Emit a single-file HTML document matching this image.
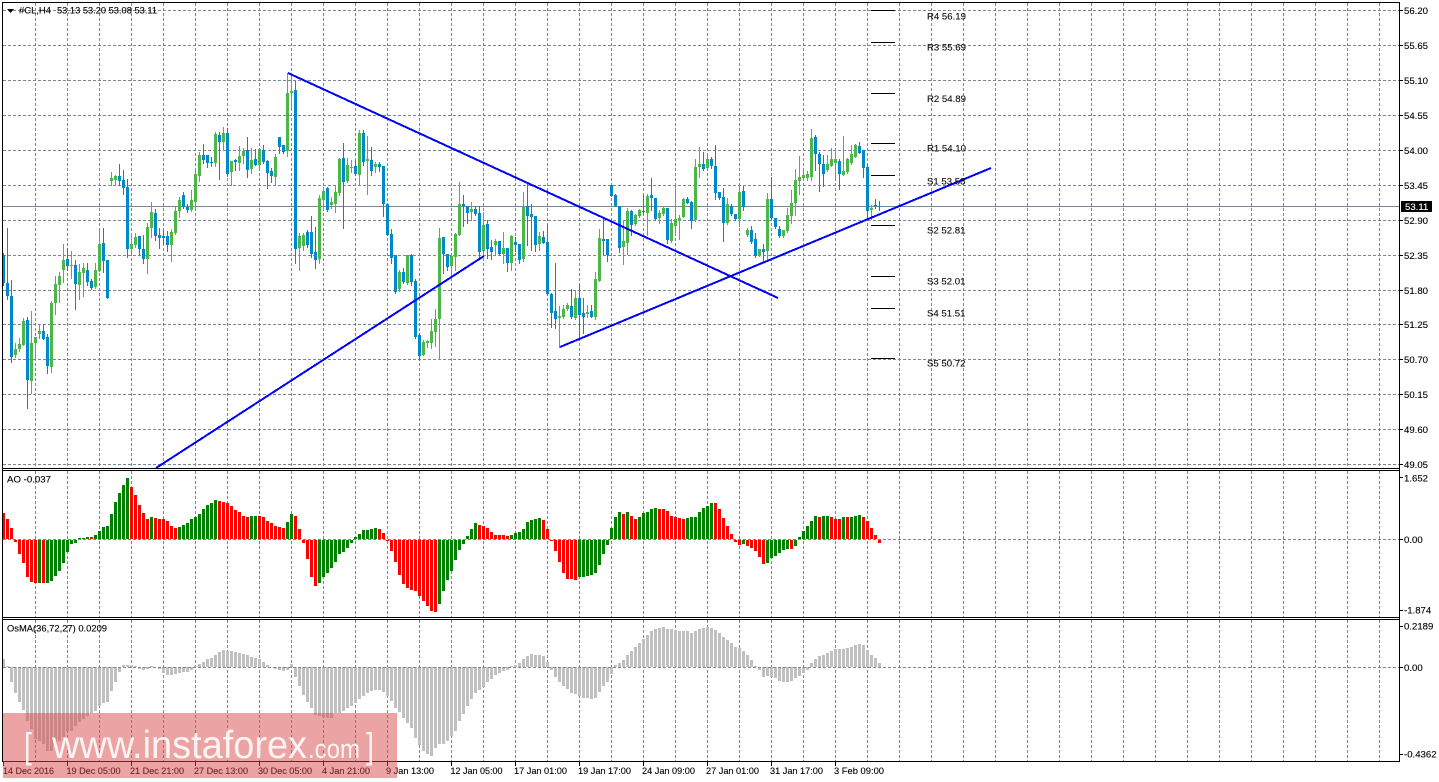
<!DOCTYPE html>
<html>
<head>
<meta charset="utf-8">
<title>#CL H4</title>
<style>
html,body{margin:0;padding:0;background:#fff;overflow:hidden}
svg{display:block}
text{font-family:"Liberation Sans",Arial,sans-serif;font-size:9.6px;fill:#000;stroke:#000;stroke-width:.12px}
.pv{font-size:9.6px;fill:#111}
.logo{fill:#fff;stroke:none;fill-opacity:.88}
</style>
</head>
<body>
<svg id="s" xmlns="http://www.w3.org/2000/svg" width="1439" height="782" viewBox="0 0 1439 782">
<rect width="1439" height="782" fill="#fff"/>
<g id="grid" shape-rendering="crispEdges"></g>
<g id="candles" shape-rendering="crispEdges"></g>
<g id="ao" shape-rendering="crispEdges"></g>
<g id="osma" shape-rendering="crispEdges"></g>
<g id="zero" shape-rendering="crispEdges"></g>

<g stroke="#000" stroke-width="1" shape-rendering="crispEdges">
<path d="M871 10.5H895M871 42.5H895M871 93.5H895M871 143.5H895M871 175.5H895M871 225.5H895M871 276.5H895M871 308.5H895M871 358.5H895"/>
</g>

<g stroke="#0000ff" stroke-width="2" fill="none" shape-rendering="crispEdges">
<path d="M288 73L778 298"/>
<path d="M156 468L484 256"/>
<path d="M560 347L991 168"/>
</g>

<g shape-rendering="crispEdges" fill="none" stroke="#000" stroke-width="1">
<path d="M2 2.5H1399.5M2.5 2V761M1399.5 2V762"/>
<path d="M2 468.5H1400M2 470.5H1400M2 617.5H1400M2 619.5H1400M2 761.5H1400"/>
</g>
<g id="ticks" shape-rendering="crispEdges" stroke="#000" stroke-width="1"></g>

<path d="M7 9H14L10.500 13Z" fill="#000"/>
<text x="19" y="13.500" textLength="32" lengthAdjust="spacingAndGlyphs">#CL,H4</text>
<text x="57" y="13.500" textLength="100" lengthAdjust="spacingAndGlyphs">53.13 53.20 53.08 53.11</text>
<text x="7" y="482.500" textLength="44" lengthAdjust="spacingAndGlyphs">AO -0.037</text>
<text x="7" y="631.500" textLength="100" lengthAdjust="spacingAndGlyphs">OsMA(36,72,27) 0.0209</text>

<g>
<text class="pv" x="927" y="19.500">R4 56.19</text>
<text class="pv" x="927" y="50.500">R3 55.69</text>
<text class="pv" x="927" y="102">R2 54.89</text>
<text class="pv" x="927" y="151.500">R1 54.10</text>
<text class="pv" x="927" y="184.500">S1 53.58</text>
<text class="pv" x="927" y="233.500">S2 52.81</text>
<text class="pv" x="927" y="284.500">S3 52.01</text>
<text class="pv" x="927" y="316.500">S4 51.51</text>
<text class="pv" x="927" y="366.500">S5 50.72</text>
</g>

<g>
<text x="1404" y="14">56.20</text>
<text x="1404" y="49">55.65</text>
<text x="1404" y="84">55.10</text>
<text x="1404" y="119">54.55</text>
<text x="1404" y="154">54.00</text>
<text x="1404" y="189">53.45</text>
<text x="1404" y="224">52.90</text>
<text x="1404" y="259">52.35</text>
<text x="1404" y="294">51.80</text>
<text x="1404" y="328">51.25</text>
<text x="1404" y="363">50.70</text>
<text x="1404" y="398">50.15</text>
<text x="1404" y="433">49.60</text>
<text x="1404" y="468">49.05</text>
<text x="1404" y="481.500">1.652</text>
<text x="1404" y="543">0.00</text>
<text x="1404" y="613.500">-1.874</text>
<text x="1404" y="629.500">0.2189</text>
<text x="1404" y="671">0.00</text>
<text x="1404" y="757.500">-0.4362</text>
</g>
<rect x="1401" y="201" width="31" height="11" fill="#000" shape-rendering="crispEdges"/>
<text x="1405" y="210" style="fill:#fff;stroke:#fff">53.11</text>

<g>
<text x="3" y="774" textLength="51" lengthAdjust="spacingAndGlyphs">14 Dec 2016</text>
<text x="66.500" y="774" textLength="54" lengthAdjust="spacingAndGlyphs">19 Dec 05:00</text>
<text x="130" y="774" textLength="54" lengthAdjust="spacingAndGlyphs">21 Dec 21:00</text>
<text x="194" y="774" textLength="54" lengthAdjust="spacingAndGlyphs">27 Dec 13:00</text>
<text x="258" y="774" textLength="54" lengthAdjust="spacingAndGlyphs">30 Dec 05:00</text>
<text x="322" y="774" textLength="48" lengthAdjust="spacingAndGlyphs">4 Jan 21:00</text>
<text x="386" y="774" textLength="48" lengthAdjust="spacingAndGlyphs">9 Jan 13:00</text>
<text x="450.500" y="774" textLength="52" lengthAdjust="spacingAndGlyphs">12 Jan 05:00</text>
<text x="514" y="774" textLength="53" lengthAdjust="spacingAndGlyphs">17 Jan 01:00</text>
<text x="578" y="774" textLength="53" lengthAdjust="spacingAndGlyphs">19 Jan 17:00</text>
<text x="642" y="774" textLength="53" lengthAdjust="spacingAndGlyphs">24 Jan 09:00</text>
<text x="706" y="774" textLength="53" lengthAdjust="spacingAndGlyphs">27 Jan 01:00</text>
<text x="770" y="774" textLength="53" lengthAdjust="spacingAndGlyphs">31 Jan 17:00</text>
<text x="834" y="774" textLength="50" lengthAdjust="spacingAndGlyphs">3 Feb 09:00</text>
</g>

<rect x="3" y="713" width="394" height="65" fill="#d94848" fill-opacity="0.5" shape-rendering="crispEdges"/>
<text class="logo" x="24" y="758" style="font-size:36px;font-weight:normal" textLength="8" lengthAdjust="spacingAndGlyphs">[</text>
<text class="logo" x="52" y="758" textLength="255" lengthAdjust="spacingAndGlyphs" style="font-size:39px">www.instaforex</text>
<text class="logo" x="308" y="758" textLength="52" lengthAdjust="spacingAndGlyphs" style="font-size:27px">.com</text>
<text class="logo" x="366" y="758" style="font-size:36px" textLength="8" lengthAdjust="spacingAndGlyphs">]</text>
</svg>

<script>
(function(){
var NS="http://www.w3.org/2000/svg";
function P(parent,d,attrs){var e=document.createElementNS(NS,"path");e.setAttribute("d",d);for(var k in attrs)e.setAttribute(k,attrs[k]);document.getElementById(parent).appendChild(e);}

/* grid */
var v="";
for(var x=35;x<=1387;x+=32){v+="M"+(x+.5)+" 3V468M"+(x+.5)+" 471V617M"+(x+.5)+" 620V761";}
var ys=[10,45,80,115,150,185,220,255,290,324,359,394,429,464],h="";
ys.forEach(function(y){h+="M3 "+(y+.5)+"H1399";});
P("grid",v+h,{stroke:"#778899","stroke-width":1,"stroke-dasharray":"3 2",fill:"none"});
P("grid","M3 206.5H1399",{stroke:"#778899","stroke-width":1,fill:"none"});

/* ticks */
var t="";
ys.forEach(function(y){t+="M1400 "+(y+.5)+"H1403";});
[539,667,477,610,626,754].forEach(function(y){t+="M1400 "+(y+.5)+"H1403";});
for(var x2=3;x2<=835;x2+=64){t+="M"+(x2+.5)+" 762V766";}
P("ticks",t,{fill:"none"});

/* candles: high, top, bottom, low, colour (1 green, 0 blue); x = 4 + 4i */
var C=[
[253,255,283,285,0],[228,283,296,299,0],[280,296,357,362,0],[343,349,355,357,1],[338,344,349,351,1],[318,321,345,345,1],[317,320,380,408,0],[311,343,381,393,1],[337,337,343,359,1],[324,331,334,338,1],
[324,331,339,339,0],[334,337,366,373,0],[301,303,367,372,1],[276,284,303,314,1],[272,276,285,302,1],[244,260,270,282,1],[248,259,266,270,0],[251,265,266,278,1],[260,265,284,309,0],[264,272,285,299,1],
[263,268,273,296,1],[263,270,282,285,0],[279,281,288,289,0],[263,270,287,288,1],[230,244,271,271,1],[228,243,261,272,0],[260,260,298,298,0],[172,178,181,185,1],[175,176,180,185,1],[164,176,181,185,0],
[170,180,188,194,0],[179,187,249,257,0],[233,244,249,253,1],[233,237,245,247,1],[236,236,249,254,0],[235,249,259,263,0],[223,227,259,273,1],[202,212,228,237,1],[209,213,236,240,0],[228,235,238,248,0],
[230,236,238,243,0],[231,236,245,251,0],[229,232,245,261,1],[206,211,233,234,1],[197,200,211,217,1],[192,195,207,208,0],[204,207,210,212,0],[190,200,210,211,1],[170,174,202,208,1],[152,155,176,181,1],
[144,155,160,163,0],[155,155,163,167,0],[157,162,163,166,0],[132,134,163,166,1],[132,135,142,179,0],[127,133,142,150,1],[128,133,174,176,0],[161,161,172,185,1],[159,160,162,170,0],[146,156,163,170,1],
[148,151,156,163,1],[137,150,170,177,0],[148,160,169,173,1],[149,159,165,165,0],[148,149,165,167,1],[145,150,162,163,0],[160,161,173,188,0],[168,171,176,182,0],[154,157,177,184,1],[137,137,147,153,0],
[145,145,152,153,0],[73,93,151,156,1],[73,91,93,107,1],[81,90,249,263,0],[233,236,248,270,1],[233,235,246,250,1],[230,232,245,247,0],[216,232,254,257,0],[227,252,260,268,0],[195,198,259,263,1],
[187,191,200,210,1],[187,188,210,211,0],[197,202,205,208,1],[185,192,204,212,1],[158,159,193,195,1],[143,158,182,228,0],[158,165,181,182,1],[160,167,168,172,1],[160,166,174,175,0],[130,133,175,185,1],
[130,133,162,165,0],[136,159,161,194,1],[147,160,171,175,0],[162,164,167,172,1],[162,164,167,171,0],[166,166,204,216,0],[204,204,235,235,0],[229,234,258,263,0],[255,255,292,293,0],[270,272,289,291,1],
[268,272,282,283,0],[255,255,283,284,1],[254,255,282,285,0],[279,281,337,338,0],[333,335,356,360,0],[340,342,355,355,1],[340,341,343,347,1],[319,331,343,348,1],[309,319,332,346,1],[228,238,319,358,1],
[237,237,254,273,0],[254,254,267,270,0],[255,256,266,274,1],[233,234,257,270,1],[182,204,235,235,1],[195,204,206,226,0],[206,206,213,223,0],[202,209,212,220,1],[206,209,214,215,0],[206,213,252,257,0],
[212,225,251,255,1],[220,224,249,258,0],[240,247,252,259,0],[239,241,245,254,1],[241,241,254,255,0],[232,248,254,263,1],[248,248,263,271,0],[235,236,263,270,1],[237,242,245,251,0],[244,244,260,263,0],
[192,207,259,261,1],[182,206,216,245,0],[204,214,217,250,0],[216,216,245,251,0],[232,236,244,250,1],[231,237,243,243,0],[225,242,294,295,0],[293,294,313,327,0],[263,311,319,328,0],[306,316,318,347,1],
[305,309,317,318,1],[303,305,309,310,1],[289,306,317,318,0],[290,298,318,319,1],[284,298,315,340,0],[298,313,317,333,0],[305,312,314,317,1],[305,311,317,317,0],[272,279,317,319,1],[229,238,281,281,1],
[218,239,241,255,0],[239,239,255,261,0],[185,185,196,196,0],[194,195,206,206,0],[206,206,248,252,0],[220,241,247,264,1],[208,211,243,254,1],[210,211,225,235,0],[214,215,224,225,1],[209,210,216,217,1],
[195,211,212,213,0],[194,196,213,235,1],[178,195,198,210,0],[198,198,219,220,0],[210,213,218,223,1],[206,208,214,215,1],[208,208,240,243,0],[219,223,241,242,1],[184,219,226,235,1],[215,218,221,239,1],
[198,199,217,217,1],[197,199,203,203,0],[201,202,221,228,0],[159,167,220,221,1],[147,164,167,177,1],[152,164,169,170,0],[155,159,168,170,1],[157,159,166,168,0],[145,166,193,199,0],[192,192,198,199,0],
[188,197,223,241,0],[198,204,223,224,1],[204,206,214,215,0],[214,214,219,220,0],[186,192,219,226,1],[186,191,207,210,0],[228,230,235,236,1],[226,230,242,243,0],[233,239,256,257,0],[249,249,255,256,1],
[244,249,252,261,0],[193,199,251,260,1],[177,199,218,219,0],[218,218,227,228,0],[226,229,236,237,0],[230,230,236,237,1],[208,215,231,232,1],[190,203,216,223,1],[169,180,203,215,1],[156,177,181,194,1],
[170,175,178,180,1],[171,174,178,180,1],[129,138,177,180,1],[135,137,154,170,0],[152,154,164,191,0],[155,164,174,186,0],[155,164,170,171,1],[148,159,166,166,1],[148,159,163,178,1],[159,161,174,189,0],
[136,171,175,175,1],[158,159,172,173,1],[145,154,163,164,1],[144,145,157,157,1],[142,146,153,153,0],[150,150,168,177,0],[164,167,211,219,0],[205,208,210,219,1],[199,205,206,208,0],[201,206,207,210,0]
];
var gb="",gw="",bb="",bw="";
C.forEach(function(c,i){
  var x=4+4*i,w="M"+(x-.5)+" "+c[0]+"V"+(c[3]+1),b="M"+(x-2)+" "+c[1]+"h3V"+(Math.max(c[2],c[1]+1))+"h-3Z";
  if(c[4]){gw+=w;gb+=b;}else{bw+=w;bb+=b;}
});
P("candles",gw,{stroke:"#4cb648","stroke-width":1,fill:"none"});
P("candles",bw,{stroke:"#0088cc","stroke-width":1,fill:"none"});
P("candles",gb,{fill:"#4cb648"});
P("candles",bb,{fill:"#0088cc"});

/* AO */
var A="78r 60r 33r -6r -42r -69r -111r -126r -129r -129g -129r -129g -123g -108g -93g -69g -36g -12g -9g 3g 3g 6g 6r 12g 24g 36g 39g 75g 111g 138g 162g 183g 156r 132r 102r 78r 60r 66g 63r 60r 60r 54r 39r 33r 36g 42g 48g 60g 66g 75g 90g 102g 108g 117g 114r 111r 108r 99r 87r 81r 69r 66r 69g 69g 69r 66r 54r 48r 39r 36r 33r 51g 75g 69r 30r -9r -57r -111r -138r -129g -111g -99g -84g -66g -42g -36g -24g -9g 6g 15g 27g 27g 30g 33g 30r 18r -3r -33r -66r -105r -132r -144r -150r -153r -168r -183r -198r -213r -216r -192g -153g -120g -93g -60g -30g -12g 9g 30g 48g 42r 39r 33r 21r 12r 12r 12r 9r 12g 18g 21g 30g 51g 57g 60g 63g 57r 30r -3r -33r -66r -99r -117r -117r -120r -111g -111g -108g -105g -99g -75g -42g -15g 33g 66g 81g 75r 81g 69r 60r 66g 78g 81g 90g 93g 90r 90r 84r 69r 66r 63r 60r 63g 66g 66g 81g 93g 99g 108g 108r 90r 63r 39r 15r -6r -15r -12g -18r -24r -33r -51r -72r -69g -54g -48g -39g -30g -27g -27r -18g 6g 24g 39g 54g 69g 66r 69g 69g 66r 60r 60r 66g 66r 66g 69g 72g 66r 54r 33r 12r -9r".split(" ");
var ar="",ag="";
A.forEach(function(s,i){
  var x=4+4*i,col=s.slice(-1),val=Math.round(parseInt(s,10)/3),d;
  if(val>=0)d="M"+(x-2)+" "+(539-val)+"h3v"+val+"h-3Z";
  else d="M"+(x-2)+" 540h3v"+(-val)+"h-3Z";
  if(col==="r")ar+=d;else ag+=d;
});
P("ao",ar,{fill:"#ff0000"});
P("ao",ag,{fill:"#008000"});

/* OsMA */
var O=[24,3,-42,-75,-102,-126,-158,-183,-213,-218,-228,-248,-248,-233,-218,-208,-188,-188,-173,-163,-153,-143,-136,-128,-115,-105,-101,-68,-41,-13,6,6,6,3,-3,-6,-3,3,0,-3,-15,-21,-21,-18,-15,-12,-12,-6,3,9,15,24,27,36,45,51,48,48,45,42,39,36,30,27,24,15,6,0,-3,-6,-9,-6,9,-27,-54,-81,-102,-120,-142,-145,-148,-150,-150,-135,-135,-128,-120,-115,-105,-93,-84,-75,-69,-66,-66,-72,-84,-99,-120,-132,-150,-165,-180,-210,-232,-248,-258,-264,-240,-228,-228,-218,-204,-190,-160,
-138,-114,-93,-75,-66,-57,-42,-33,-21,-15,-9,-6,3,6,12,24,33,39,36,36,33,15,-6,-27,-42,-54,-63,-75,-78,-84,-90,-90,-93,-90,-72,-54,-42,-18,6,12,21,36,48,60,72,84,96,108,114,117,120,114,114,111,108,108,108,102,108,114,117,120,117,111,102,90,81,72,60,57,48,36,21,3,-6,-27,-24,-27,-30,-39,-42,-42,-39,-30,-24,-15,-6,12,24,33,36,42,48,54,54,54,57,60,66,69,66,51,36,27,12];
var od="";
O.forEach(function(q,i){
  var x=4+4*i,val=Math.round(q/3);
  if(val===0)return;
  if(val>0)od+="M"+(x-2)+" "+(667-val)+"h3v"+val+"h-3Z";
  else od+="M"+(x-2)+" 667h3v"+(-val+1)+"h-3Z";
});
P("osma",od,{fill:"#c0c0c0"});

/* zero lines */
P("zero","M3 539.5H1399M3 667.5H1399",{stroke:"#778899","stroke-width":1,"stroke-dasharray":"3 2",fill:"none"});
})();
</script>
</body>
</html>
